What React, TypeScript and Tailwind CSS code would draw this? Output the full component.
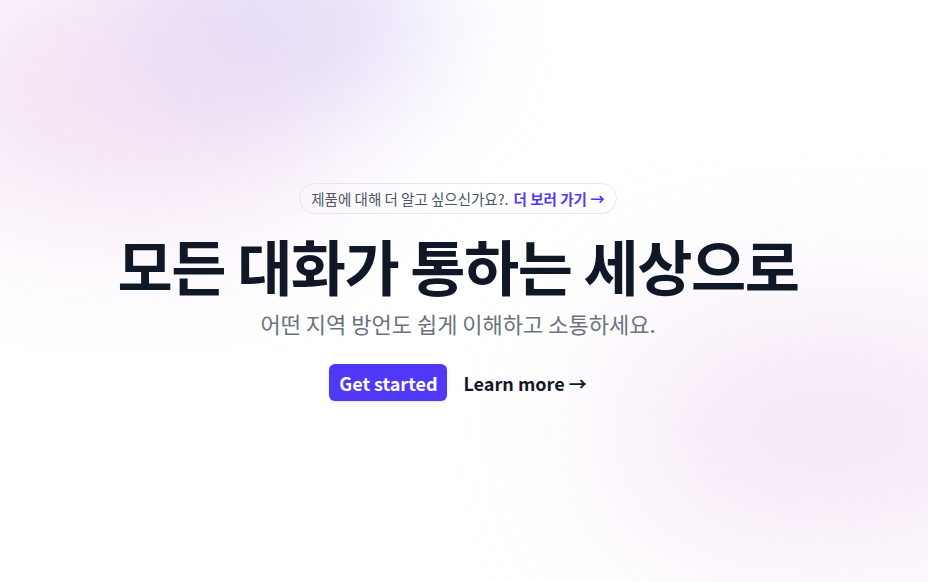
import React from 'react'

const App: React.FC = () => {
  return (
    <div
      className="relative min-h-screen h-[582px] overflow-hidden bg-white flex items-center justify-center pr-3"
      style={{ fontFamily: '"Noto Sans CJK KR", "Noto Sans", sans-serif' }}
    >
      {/* Background blobs */}
      <div className="pointer-events-none absolute inset-0">
        <div className="absolute -left-[80px] -top-[40px] w-[420px] h-[260px] rounded-full bg-[#f0d8f0] opacity-70 blur-[70px]" />
        <div className="absolute left-[140px] -top-[60px] w-[300px] h-[160px] rounded-full bg-[#dcd2f6] opacity-70 blur-[60px]" />
        <div className="absolute left-[620px] top-[320px] w-[420px] h-[220px] rounded-full bg-[#efdaf2] opacity-70 blur-[80px]" />
      </div>

      <div className="relative flex flex-col items-center pt-[2px]">
        {/* Announcement pill */}
        <div className="flex items-center rounded-full border border-gray-200 px-[11px] h-[31px] text-[14.5px] text-gray-600">
          <span>제품에 대해 더 알고 싶으신가요?.</span>
          <span className="ml-[5px] font-semibold text-indigo-600">더 보러 가기 →</span>
        </div>

        {/* Heading */}
        <h1 className="mt-[15px] text-6xl leading-[72px] font-bold tracking-tight text-gray-900">
          모든 대화가 통하는 세상으로
        </h1>
        <p className="mt-[6px] text-[22px] leading-8 text-gray-500">
          어떤 지역 방언도 쉽게 이해하고 소통하세요.
        </p>

        {/* Actions */}
        <div className="mt-[25px] flex items-center gap-x-4">
          <a className="rounded-md bg-indigo-600 px-[10px] h-[37px] flex items-center text-lg font-semibold text-white shadow-sm">
            Get started
          </a>
          <a className="text-lg font-semibold text-gray-900">
            Learn more <span>→</span>
          </a>
        </div>
      </div>
    </div>
  )
}

export default App
